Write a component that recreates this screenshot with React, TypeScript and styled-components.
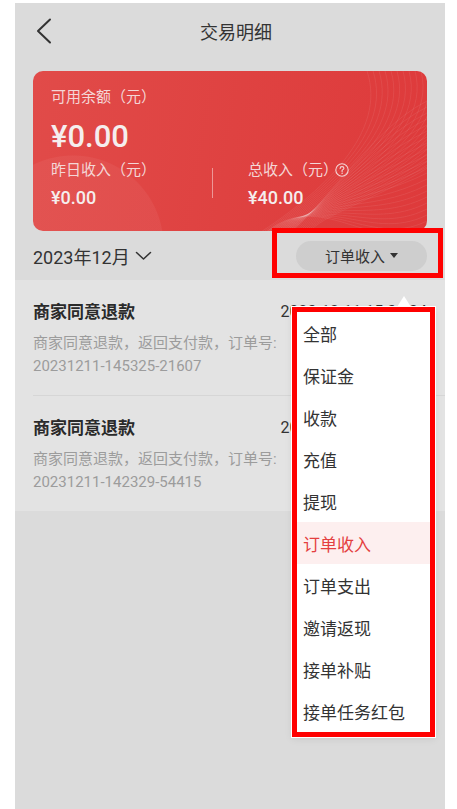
import React from 'react';
import styled, { createGlobalStyle } from 'styled-components';

const GlobalStyle = createGlobalStyle`
  html, body {
    margin: 0;
    padding: 0;
    background: #ffffff;
  }
  body {
    font-family: Roboto, "Noto Sans CJK SC", sans-serif;
    color: #333;
  }
  * {
    box-sizing: border-box;
  }
`;

const Screen = styled.div`
  position: relative;
  width: 430px;
  min-height: 806px;
  margin: 3px 0 0 15px;
  background: #dbdbdb;
  display: flex;
  flex-direction: column;
`;

const Header = styled.div`
  display: grid;
  grid-template-columns: 60px 1fr 48px;
  align-items: center;
  height: 56px;
`;

const BackButton = styled.div`
  display: flex;
  align-items: center;
  padding-left: 21px;
  color: #333;
`;

const Title = styled.div`
  text-align: center;
  font-size: 18px;
  color: #333;
`;

const Card = styled.div`
  position: relative;
  overflow: hidden;
  margin: 12px 18px 0;
  height: 160px;
  border-radius: 10px;
  padding: 16px 18px 0;
  color: #f6e3e3;
  background:
    radial-gradient(circle at 40px 175px, rgba(255, 255, 255, 0.05) 0, rgba(255, 255, 255, 0.05) 90px, transparent 91px),
    linear-gradient(100deg, #e14b49 0%, #df4241 50%, #de3a3b 100%);
`;

const Waves = styled.svg`
  position: absolute;
  right: 0;
  top: 0;
  pointer-events: none;
`;

const CardLabel = styled.div`
  position: relative;
  font-size: 15px;
  line-height: 20px;
  color: #f4d6d6;
  display: flex;
  align-items: center;
`;

const HelpIcon = styled.svg`
  margin-left: -3px;
`;

const Balance = styled.div`
  position: relative;
  margin-top: 10px;
  font-size: 31px;
  font-weight: 500;
  line-height: 40px;
  color: #f5eeee;
`;

const Stats = styled.div`
  position: relative;
  display: grid;
  grid-template-columns: 161px 1px 1fr;
  margin-top: 3px;
`;

const Stat = styled.div<{ $inset?: boolean }>`
  padding-left: ${(p) => (p.$inset ? '35px' : '0')};
`;

const Divider = styled.div`
  margin-top: 8px;
  height: 30px;
  background: rgba(255, 255, 255, 0.45);
`;

const StatValue = styled.div`
  margin-top: 6px;
  font-size: 18px;
  font-weight: 500;
  line-height: 24px;
  color: #f5eeee;
`;

const FilterRow = styled.div`
  display: flex;
  align-items: center;
  justify-content: space-between;
  height: 49px;
  padding: 0 18px;
`;

const MonthPicker = styled.div`
  display: flex;
  align-items: center;
  gap: 5px;
  font-size: 18px;
  color: #333;
`;

const Pill = styled.div`
  display: flex;
  align-items: center;
  justify-content: center;
  gap: 5px;
  width: 131px;
  height: 30px;
  border-radius: 15px;
  background: #cecece;
  font-size: 15px;
  color: #333;
`;

const Caret = styled.span`
  width: 0;
  height: 0;
  border-left: 4px solid transparent;
  border-right: 4px solid transparent;
  border-top: 5px solid #333;
`;

const List = styled.div`
  background: #e3e3e3;
`;

const Item = styled.div`
  padding: 20px 18px 17px 0;
  margin-left: 18px;
  border-bottom: 1px solid #d6d6d6;

  &:last-child {
    border-bottom: none;
  }
`;

const ItemHead = styled.div`
  display: flex;
  justify-content: space-between;
  align-items: center;
  line-height: 24px;
`;

const ItemTitle = styled.div`
  font-size: 17px;
  font-weight: 700;
  color: #2a2a2a;
`;

const ItemDate = styled.div`
  font-size: 16px;
  color: #333;
`;

const ItemDesc = styled.div`
  margin-top: 8px;
  font-size: 15px;
  line-height: 23px;
  color: #9c9c9c;
`;

const Marker = styled.div`
  position: absolute;
  left: 257px;
  top: 225px;
  width: 171px;
  height: 50px;
  border: 5px solid #ff0000;
  pointer-events: none;
`;

const Popup = styled.div`
  position: absolute;
  left: 277px;
  top: 304px;
  width: 143px;
  background: #ffffff;
  border: 5px solid #ff0000;
  box-shadow: 0 0 0 1px #ffffff, 0 2px 8px rgba(0, 0, 0, 0.08);
`;

const PopupArrow = styled.span`
  position: absolute;
  top: -16px;
  left: 100px;
  width: 0;
  height: 0;
  border-left: 7px solid transparent;
  border-right: 7px solid transparent;
  border-bottom: 11px solid #ffffff;
`;

const MenuItem = styled.div<{ $active?: boolean }>`
  display: flex;
  align-items: center;
  height: 42px;
  padding-left: 6px;
  font-size: 17px;
  color: ${(p) => (p.$active ? '#e43f3f' : '#333')};
  background: ${(p) => (p.$active ? '#fdefef' : 'transparent')};
`;

const filters = ['全部', '保证金', '收款', '充值', '提现', '订单收入', '订单支出', '邀请返现', '接单补贴', '接单任务红包'];

const records = [
  { title: '商家同意退款', date: '2023-12-11 15:33:04', desc: '商家同意退款，返回支付款，订单号:', order: '20231211-145325-21607' },
  { title: '商家同意退款', date: '2023-12-11 14:23:29', desc: '商家同意退款，返回支付款，订单号:', order: '20231211-142329-54415' },
];

const wavePaths = Array.from({ length: 22 }, (_, i) => {
  const x0 = 150 + i * 6;
  const y1 = 30 + i * 6;
  return `M${x0} 0 C ${x0 + 20} ${60 + i * 2}, ${110 - i * 2} ${120 + i}, ${30 + i * 3} 170 M 210 ${y1} C 150 ${y1 + 30}, 100 ${150 - i * 2}, ${60 - i} 170`;
});

export default function App() {
  const current = '订单收入';

  return (
    <Screen>
      <GlobalStyle />
      <Header>
        <BackButton>
          <svg width="16" height="26" viewBox="0 0 16 26" fill="none">
            <polyline points="14,1.5 2,13 14,24.5" stroke="#333" strokeWidth="2" strokeLinecap="round" strokeLinejoin="round" />
          </svg>
        </BackButton>
        <Title>交易明细</Title>
        <div />
      </Header>

      <Card>
        <Waves width="210" height="160" viewBox="0 0 210 160" fill="none">
          {wavePaths.map((d, i) => (
            <path key={i} d={d} stroke="rgba(255,255,255,0.11)" strokeWidth="0.7" />
          ))}
        </Waves>
        <CardLabel>可用余额（元）</CardLabel>
        <Balance>¥0.00</Balance>
        <Stats>
          <Stat>
            <CardLabel>昨日收入（元）</CardLabel>
            <StatValue>¥0.00</StatValue>
          </Stat>
          <Divider />
          <Stat $inset>
            <CardLabel>
              总收入（元）
              <HelpIcon width="14" height="14" viewBox="0 0 14 14" fill="none">
                <circle cx="7" cy="7" r="6.2" stroke="#f4d6d6" strokeWidth="1.1" />
                <path d="M5.1 5.4 C5.1 4.2 6 3.6 7 3.6 C8.1 3.6 8.9 4.3 8.9 5.3 C8.9 6.4 7.5 6.6 7.1 7.4 L7.1 8.4" stroke="#f4d6d6" strokeWidth="1.1" strokeLinecap="round" />
                <circle cx="7.1" cy="10.3" r="0.75" fill="#f4d6d6" />
              </HelpIcon>
            </CardLabel>
            <StatValue>¥40.00</StatValue>
          </Stat>
        </Stats>
      </Card>

      <FilterRow>
        <MonthPicker>
          2023年12月
          <svg width="17" height="10" viewBox="0 0 17 10" fill="none">
            <polyline points="1.5,1.5 8.5,8 15.5,1.5" stroke="#333" strokeWidth="1.5" strokeLinecap="round" strokeLinejoin="round" />
          </svg>
        </MonthPicker>
        <Pill>
          {current}
          <Caret />
        </Pill>
      </FilterRow>

      <List>
        {records.map((r, i) => (
          <Item key={i}>
            <ItemHead>
              <ItemTitle>{r.title}</ItemTitle>
              <ItemDate>{r.date}</ItemDate>
            </ItemHead>
            <ItemDesc>
              {r.desc}
              <br />
              {r.order}
            </ItemDesc>
          </Item>
        ))}
      </List>

      <Marker />

      <Popup>
        <PopupArrow />
        {filters.map((f) => (
          <MenuItem key={f} $active={f === current}>
            {f}
          </MenuItem>
        ))}
      </Popup>
    </Screen>
  );
}
